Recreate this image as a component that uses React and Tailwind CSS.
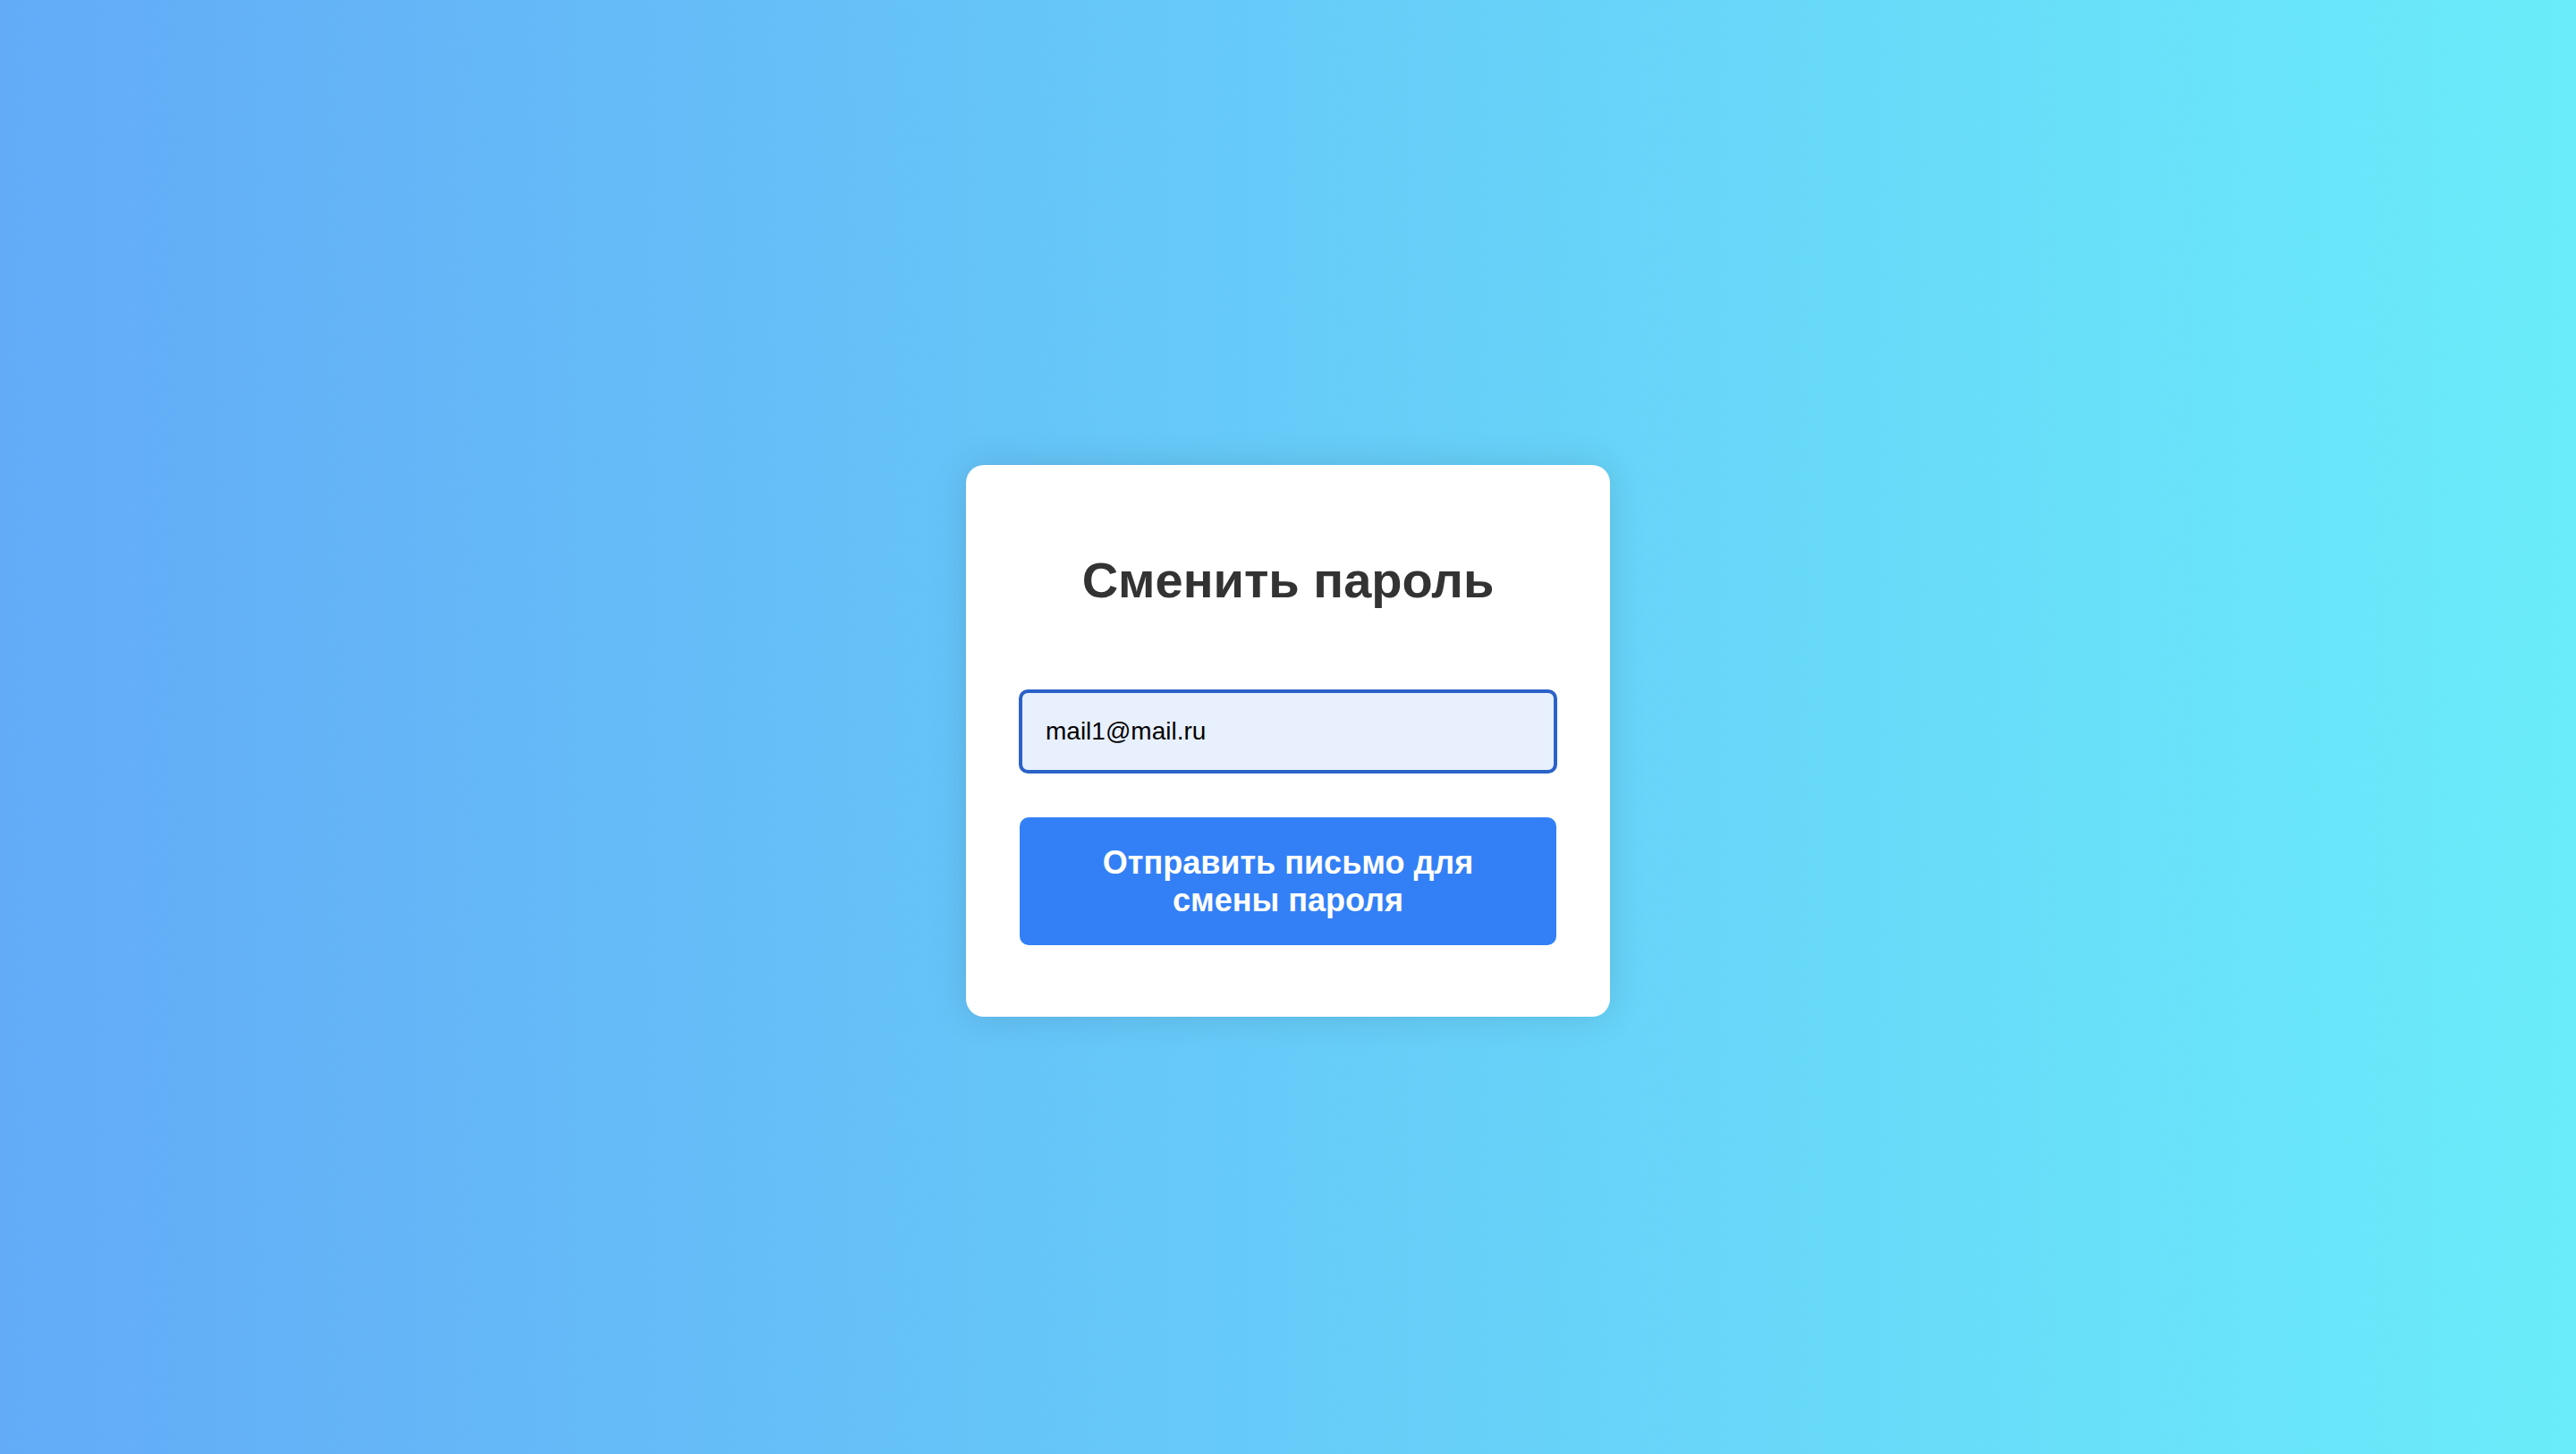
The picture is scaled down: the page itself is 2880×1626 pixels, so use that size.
export default function App() {
  return (
    <div className="box-border flex h-screen w-full items-center justify-center bg-[linear-gradient(to_right,#63abf7,#6aecfa)] pt-[31px] font-['Liberation_Sans',Arial,sans-serif]">
      <div className="flex w-[720px] flex-col rounded-[20px] bg-white px-[60px] pt-[80px] pb-[80px] shadow-[0_0_40px_rgba(0,0,0,0.12)]">
        <h2 className="mt-[17px] text-center text-[56px] font-bold leading-[64px] text-[#333333]">
          Сменить пароль
        </h2>
        <input
          type="email"
          defaultValue="mail1@mail.ru"
          className="mx-[-1px] mt-[90px] box-border h-[94px] rounded-[10px] border-[4px] border-[#2a62c9] bg-[#e8f0fe] pl-[26px] text-[28px] text-black outline-none"
        />
        <button
          type="button"
          className="mt-[49px] h-[143px] rounded-[10px] bg-[#3380f6] px-[60px] text-center text-[36px] font-bold leading-[41.5px] text-white"
        >
          Отправить письмо для
          <br />
          смены пароля
        </button>
      </div>
    </div>
  );
}
